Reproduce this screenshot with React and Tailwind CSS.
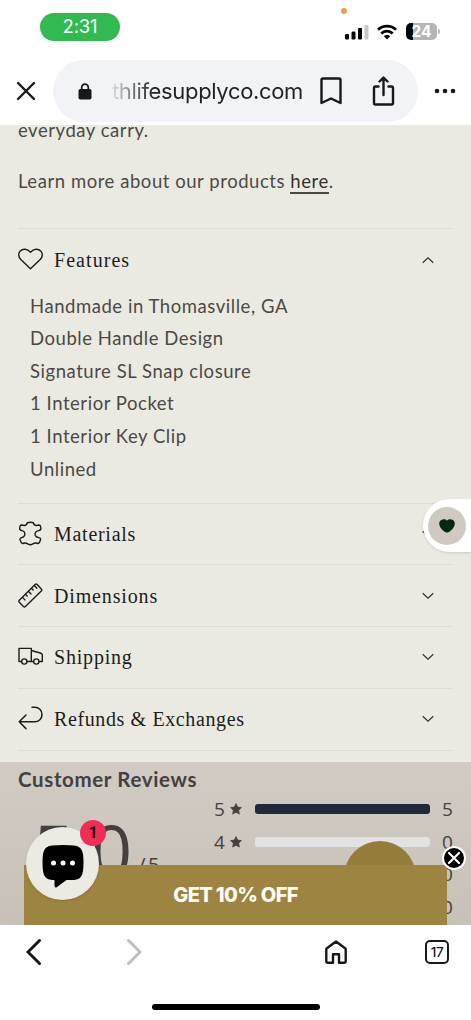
import React from 'react';

const features = [
    'Handmade in Thomasville, GA',
    'Double Handle Design',
    'Signature SL Snap closure',
    '1 Interior Pocket',
    '1 Interior Key Clip',
    'Unlined',
];

const ratings = [
    { stars: 5, count: 5, percent: 100 },
    { stars: 4, count: 0, percent: 0 },
    { stars: 3, count: 0, percent: 0 },
    { stars: 2, count: 0, percent: 0 },
];

const HeartIcon = () => (
    <svg className="w-[26px] h-[26px] shrink-0" viewBox="0 0 26 26" fill="none" stroke="#1c1c1a" strokeWidth="1.4" strokeLinejoin="round">
        <path d="M12.500 21.800 2.800 12.500C.2 9.900.1 6.200 2.200 4 4.800 1.500 9.200 1.600 12.500 5.200c3.300-3.600 7.700-3.700 10.300-1.200 2.100 2.200 2 5.900-.6 8.500z" />
    </svg>
);

const LeatherIcon = () => (
    <svg className="w-[26px] h-[26px] shrink-0" viewBox="0 0 26 26" fill="none" stroke="#1c1c1a" strokeWidth="1.4" strokeLinejoin="round" strokeLinecap="round">
        <path d="M9.300 1.700Q12.300.9 15.300 1.700C15.800 3.500 16.800 4.500 18.200 4.500L20.900 4Q22.300 4 22.600 5.500L22.900 7.500C23 8.700 22.100 9.300 20.600 9.600 17.600 10.200 16.600 12 17.200 14.300 17.800 15.900 19.500 16.500 21.500 16.900 22.700 17.200 22.900 18.300 22.300 19.300L21.300 21.700C20.600 22.800 19.700 22.700 18.300 22 17 21.700 15.700 22.300 14.400 23.200Q12.300 24.300 10.200 23.200C8.900 22.300 7.600 21.700 6.300 22 4.700 22.700 3.900 22.800 3.300 21.700L2.300 19.300C1.700 18.300 1.900 17.200 3.100 16.900 5.100 16.500 6.300 15.700 6.700 14.300 7.200 12 6.500 10.200 4 9.600 2.500 9.300 1.600 8.700 1.700 7.500L2 5.500Q2.300 4 3.700 4L6.400 4.500C7.800 4.500 8.800 3.500 9.300 1.700Z" />
    </svg>
);

const RulerIcon = () => (
    <svg className="w-[26px] h-[26px] shrink-0" viewBox="0 0 26 26" fill="none" stroke="#1c1c1a" strokeWidth="1.4" strokeLinejoin="round" strokeLinecap="round">
        <path d="M1.300 17.300Q.4 18.200 1.300 19.200L5.400 23.500Q6.400 24.500 7.400 23.500L23.300 8Q24.300 7 23.300 6L19.200 1.600Q18.100.6 17.100 1.600z" />
        <path d="m4.600 14.400 2.300 2.500m.7-5.500 1.600 1.600m1.400-4.500 2.400 2.400m.6-5.400 1.600 1.600m1.400-4.300 2.300 2.400" />
    </svg>
);

const TruckIcon = () => (
    <svg className="w-[26px] h-[26px] shrink-0" viewBox="0 0 26 26" fill="none" stroke="#1c1c1a" strokeWidth="1.4" strokeLinejoin="round">
        <path d="M3.700 17.500H1V4.400h12.300v13.100H8.900m4.400-11 9 2.500q2 .6 2 2v6.500H21m-5.500 0h-2.200" />
        <circle cx="6.300" cy="17.500" r="2.600" />
        <circle cx="18.300" cy="17.500" r="2.600" />
    </svg>
);

const ReturnIcon = () => (
    <svg className="w-[26px] h-[26px] shrink-0" viewBox="0 0 26 26" fill="none" stroke="#1c1c1a" strokeWidth="1.5" strokeLinejoin="round" strokeLinecap="round">
        <path d="M14 1.200h2.700a7.300 7.300 0 0 1 0 14.600H1.200M8 9 1.200 15.800 8 22.600" />
    </svg>
);

const Chevron = ({ up }) => (
    <svg className={up ? 'w-3 h-2 rotate-180' : 'w-3 h-2'} viewBox="0 0 12 8" fill="none" stroke="#33332f" strokeWidth="1.200">
        <path d="m.7 1.300 5.300 5 5.300-5" />
    </svg>
);

const Star = () => (
    <svg className="w-3 h-3 ml-[5px]" viewBox="0 0 24 24" fill="#45403f" stroke="#45403f" strokeWidth="1.500" strokeLinejoin="round">
        <path d="m12 1.200 3.300 7 7.500 1-5.500 5.300 1.400 7.700L12 18.400l-6.700 3.800 1.400-7.700L1.200 9.200l7.500-1z" />
    </svg>
);

function Row({ icon, title, open, tracking }) {
    return (
        <div className="h-[61.700px] flex items-center pr-[19px] shrink-0">
            {icon}
            <h2 className={`ml-[10px] font-['Liberation_Serif'] text-[20px] leading-6 text-[#1d1d1b] whitespace-nowrap ${tracking}`}>{title}</h2>
            <span className="ml-auto"><Chevron up={open} /></span>
        </div>
    );
}

function BrowserHeader() {
    return (
        <header className="h-[125px] shrink-0 bg-white">
            <div className="h-[60px] relative flex items-start">
                <span className="absolute left-[341px] top-[8px] w-[6px] h-[6px] rounded-full bg-[#eba14e]" />
                <div className="ml-10 mt-[13px] w-20 h-7 rounded-full bg-[#32ba52] flex items-center justify-center font-[Inter] text-[18.500px] text-white tracking-[-0.2px]">2:31</div>
                <div className="ml-auto mr-[34px] mt-[23px] flex items-center">
                    <svg className="w-6 h-4" viewBox="0 0 24 16">
                        <rect x="0" y="10" width="4" height="5.500" rx="1.200" />
                        <rect x="6.500" y="7.500" width="4" height="8" rx="1.200" />
                        <rect x="13" y="4" width="4" height="11.500" rx="1.200" />
                        <rect x="19.500" y="1" width="4" height="14.500" rx="1.200" fill="#c9c9c9" />
                    </svg>
                    <svg className="w-5 h-4 ml-2" viewBox="0 0 20 16" fill="none" stroke="#000" strokeWidth="2.800">
                        <path d="M1 5.700a13 13 0 0 1 18 0M4.300 9.500a8.200 8.200 0 0 1 11.400 0" />
                        <path d="m10 15.500-3.200-3.200a4.600 4.600 0 0 1 6.400 0z" fill="#000" stroke="none" />
                    </svg>
                    <div className="ml-[9px] w-[31px] h-[17px] rounded-[5px] bg-gradient-to-r from-black from-[24%] to-[#b6b6b6] to-[24%] flex items-center justify-center font-[Inter] font-bold text-[15.500px] text-white">24</div>
                    <span className="w-[2px] h-[5px] rounded-r bg-[#b6b6b6] ml-px -mr-[3px]" />
                </div>
            </div>
            <div className="h-[62px] flex items-center">
                <svg className="w-5 h-5 ml-4" viewBox="0 0 20 20" stroke="#17181a" strokeWidth="2.400" strokeLinecap="round">
                    <path d="m2 2 16 16M18 2 2 18" />
                </svg>
                <div className="ml-[17px] w-[365px] h-[62px] rounded-[31px] bg-[#f2f3f7] flex items-center shrink-0">
                    <svg className="w-[14px] h-[17px] ml-[25px]" viewBox="0 0 14 17">
                        <rect x=".5" y="6" width="13" height="10.500" rx="1.800" fill="#17181a" />
                        <path d="M3.700 7V4.500a3.300 3.300 0 0 1 6.600 0V7" fill="none" stroke="#17181a" strokeWidth="1.700" />
                    </svg>
                    <span className="ml-[20px] w-[191px] font-[Inter] text-[22px] leading-7 tracking-[-0.35px] whitespace-nowrap bg-gradient-to-r from-[#dfe0e3] to-[#202124] to-[22%] bg-clip-text text-transparent">thlifesupplyco.com</span>
                    <svg className="w-[22px] h-7 ml-[17px]" viewBox="0 0 22 28" fill="none" stroke="#17181a" strokeWidth="2.400" strokeLinejoin="round">
                        <path d="M1.500 26V3q0-1.500 1.500-1.500h16q1.500 0 1.500 1.500v23L11 21.500z" />
                    </svg>
                    <svg className="w-6 h-[30px] ml-[30px]" viewBox="0 0 24 30" fill="none" stroke="#17181a" strokeWidth="2.400" strokeLinecap="round" strokeLinejoin="round">
                        <path d="M6.500 10.500h-3Q2 10.500 2 12v15q0 1.500 1.500 1.500h16q1.500 0 1.500-1.500V12q0-1.500-1.500-1.500h-3M11.500 19V2M7.500 5.500l4-4 4 4" />
                    </svg>
                </div>
                <svg className="w-[22px] h-[6px] ml-[16px]" viewBox="0 0 22 6" fill="#17181a">
                    <circle cx="3" cy="3" r="2.300" />
                    <circle cx="11" cy="3" r="2.300" />
                    <circle cx="19" cy="3" r="2.300" />
                </svg>
            </div>
        </header>
    );
}

function Reviews() {
    return (
        <section className="h-[163px] shrink-0 overflow-hidden bg-gradient-to-b from-[#d1cbc4] to-[#c7c1b8] px-[18px] text-[#45403f]">
            <h2 className="pt-[5px] font-[Lato] font-bold text-[20.500px] leading-6 tracking-[0.630px]">Customer Reviews</h2>
            <div className="flex">
                <div className="w-[196px] pt-[16px] flex items-start whitespace-nowrap font-['Open_Sans']">
                    <span className="ml-[15px] text-[72px] leading-[84px] tracking-[-1px]">5.0</span>
                    <span className="ml-[7px] mt-[44px] text-[20px] leading-7 tracking-[2.500px]">/5</span>
                </div>
                <div className="flex-1 pt-[2px]">
                    {ratings.map((rating) => (
                        <div key={rating.stars} className="h-[32.500px] flex items-center font-['Open_Sans'] text-[19px]">
                            <span className="w-[11px]">{rating.stars}</span>
                            <Star />
                            <div className="ml-[13px] w-[175px] h-[10px] rounded-[3px] bg-[#e2e2e2] overflow-hidden">
                                <div className="h-full bg-[#1e293b]" style={{ width: `${rating.percent}%` }} />
                            </div>
                            <span className="ml-[12px]">{rating.count}</span>
                        </div>
                    ))}
                </div>
            </div>
        </section>
    );
}

function PromoBanner() {
    return (
        <>
            {/* Round tab peeking out from behind the banner */}
            <div className="absolute left-[344px] top-[716px] w-[72px] h-[72px] rounded-full bg-[#957c3b]" />
            <div className="absolute left-[24px] top-[740px] w-[423px] h-[60px] bg-[#9e8441] flex items-center justify-center">
                <span className="font-[Inter] font-extrabold text-[20px] tracking-[-0.650px] text-[#fffdf5]">GET 10% OFF</span>
            </div>
            <button className="absolute left-[442px] top-[721px] w-6 h-6 rounded-full bg-black border-2 border-white flex items-center justify-center">
                <svg className="w-[14px] h-[14px] shrink-0" viewBox="0 0 14 14" stroke="#fff" strokeWidth="2.200" strokeLinecap="round">
                    <path d="m2 2 10 10M12 2 2 12" />
                </svg>
            </button>
        </>
    );
}

function ChatBubble() {
    return (
        <div className="absolute left-[26px] top-[702px] w-[73px] h-[73px] rounded-full bg-[#ecebe3] shadow-sm">
            <svg className="absolute left-[15px] top-[17px] w-[44px] h-[44px]" viewBox="0 0 44 44">
                <path d="M11 1.500Q22 .5 33 1.500 41 2 42 10 43 18.500 42 27 41 35.500 33 36h-7.500L16 43q-2.500 1.500-2.500-1.500V36H11Q3 35.500 2 27 1 18.500 2 10 3 2 11 1.500Z" />
                <g fill="#fff">
                    <circle cx="12.500" cy="19" r="2.500" />
                    <circle cx="22" cy="19" r="2.500" />
                    <circle cx="31.500" cy="19" r="2.500" />
                </g>
            </svg>
            <span className="absolute left-[54px] -top-[7px] w-[26px] h-[26px] rounded-full bg-[#f12c55] flex items-center justify-center font-[Roboto] font-bold text-[16px] text-[#1c0a10]">1</span>
        </div>
    );
}

function BrowserNav() {
    return (
        <footer className="h-[95px] shrink-0 bg-white flex flex-col items-center">
            <div className="w-full h-[54px] flex items-center">
                <svg className="w-4 h-7 ml-[26px]" viewBox="0 0 16 28" fill="none" stroke="#17181a" strokeWidth="3" strokeLinecap="round">
                    <path d="M13.500 2.500 2 14l11.500 11.500" />
                </svg>
                <svg className="w-4 h-7 ml-[84px]" viewBox="0 0 16 28" fill="none" stroke="#bfc0c6" strokeWidth="3" strokeLinecap="round">
                    <path d="M2.500 2.500 14 14 2.500 25.500" />
                </svg>
                <svg className="w-[22px] h-6 ml-[183px]" viewBox="0 0 22 24" fill="none" stroke="#17181a" strokeWidth="2.400" strokeLinejoin="round">
                    <path d="M1.300 9.500q0-.8.6-1.300L11 1.500l9.100 6.700q.6.5.6 1.300v11.700q0 1.500-1.500 1.500H14v-8.500H8v8.500H2.800q-1.500 0-1.500-1.500z" />
                </svg>
                <div className="ml-[78px] w-6 h-6 rounded-[5px] border-2 border-[#17181a] flex items-center justify-center font-[Inter] font-medium text-[13.500px] tracking-[-0.4px] text-[#17181a]">17</div>
            </div>
            <div className="mt-[25px] w-[168px] h-[6px] rounded-full bg-black" />
        </footer>
    );
}

export default function App() {
    return (
        <div className="w-[471px] h-[1020px] flex flex-col overflow-hidden bg-white">
            <BrowserHeader />

            <main className="relative h-[800px] shrink-0 overflow-hidden flex flex-col bg-[#ebeae2]">
                <div className="px-[18px] h-[637px] shrink-0">
                    <div className="-mt-2 h-[111px] font-[Lato] text-[18.500px] leading-[26px] tracking-[0.550px] text-[#4b4945]">
                        <p>everyday carry.</p>
                        <p className="mt-[25px]">Learn more about our products <a href="#" className="text-[#33312e] border-b-2 border-[#4b4945] inline-block leading-[22px]">here</a>.</p>
                    </div>

                    {/* Accordion */}
                    <div className="border-y border-[#dddcd4] divide-y divide-[#dddcd4]">
                        <div className="h-[274.500px]">
                            <Row icon={<HeartIcon />} title="Features" tracking="tracking-[1.050px]" open />
                            <ul className="-mt-px ml-3 font-[Lato] text-[18.500px] leading-[32.600px] tracking-[0.550px] text-[#4b4945]">
                                {features.map((feature) => (
                                    <li key={feature}>{feature}</li>
                                ))}
                            </ul>
                        </div>
                        <Row icon={<LeatherIcon />} title="Materials" tracking="tracking-[0.720px]" />
                        <Row icon={<RulerIcon />} title="Dimensions" tracking="tracking-[0.850px]" />
                        <Row icon={<TruckIcon />} title="Shipping" tracking="tracking-[0.800px]" />
                        <Row icon={<ReturnIcon />} title="Refunds &amp; Exchanges" tracking="tracking-[0.620px]" />
                    </div>
                </div>

                <Reviews />

                {/* Wishlist tab */}
                <div className="absolute right-0 top-[374px] w-[48px] h-[53px] rounded-l-full bg-white flex items-center pl-[5px] shadow-sm">
                    <div className="w-[38px] h-[38px] rounded-full bg-[#cfc9c2] flex items-center justify-center">
                        <svg className="w-4 h-[14px]" viewBox="0 0 16 14" fill="#03280f">
                            <path d="M8 1.700C10-.5 14.200-.1 15.500 3c1.100 3.200-1.300 6.500-4.200 9-2.300 2-4.300 2-6.600 0C1.800 9.500-.6 6.200.5 3 1.800-.1 6-.5 8 1.700Z" />
                        </svg>
                    </div>
                </div>

                <PromoBanner />
                <ChatBubble />
            </main>

            <BrowserNav />
        </div>
    );
}
